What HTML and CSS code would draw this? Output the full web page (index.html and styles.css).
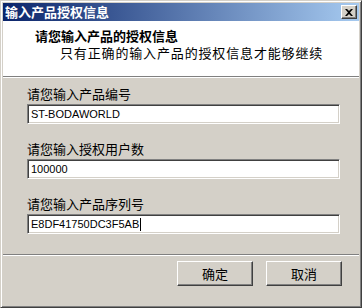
FILE: index.html
```html
<!DOCTYPE html>
<html lang="zh-CN">
<head>
    <meta charset="UTF-8">
    <title>输入产品授权信息</title>
    <link rel="stylesheet" href="styles.css">
</head>
<body>
    <div class="window">
        <div class="titlebar">
            <span class="title">输入产品授权信息</span>
            <button class="close-btn">
                <svg width="8" height="7" viewBox="0 0 8 7">
                    <path d="M0 0h2l2 2 2-2h2L5 3.5 8 7H6L4 5 2 7H0l3-3.5z" fill="#000"/>
                </svg>
            </button>
        </div>

        <div class="header">
            <div class="header-title">请您输入产品的授权信息</div>
            <div class="header-sub">只有正确的输入产品的授权信息才能够继续</div>
        </div>
        <div class="separator"></div>

        <div class="form">
            <div class="field">
                <label>请您输入产品编号</label>
                <div class="textbox">ST-BODAWORLD</div>
            </div>
            <div class="field">
                <label>请您输入授权用户数</label>
                <div class="textbox">100000</div>
            </div>
            <div class="field">
                <label>请您输入产品序列号</label>
                <div class="textbox">E8DF41750DC3F5AB<span class="caret"></span></div>
            </div>
        </div>

        <div class="separator bottom"></div>

        <div class="buttons">
            <button class="btn">确定</button>
            <button class="btn">取消</button>
        </div>
    </div>
</body>
</html>
```

FILE: styles.css
```css
body {
    margin: 0;
    font-family: "Noto Sans CJK SC", "Liberation Sans", sans-serif;
    font-size: 13px;
    color: #000;
}

.window {
    width: 362px;
    height: 308px;
    box-sizing: border-box;
    background-color: #d4d0c8;
    border-top: 1px solid #d4d0c8;
    border-left: 1px solid #d4d0c8;
    border-right: 1px solid #404040;
    border-bottom: 1px solid #404040;
    box-shadow: inset 1px 1px #fff, inset -1px -1px #808080;
    padding: 2px;
    display: flex;
    flex-direction: column;
}

.titlebar {
    height: 18px;
    display: flex;
    align-items: center;
    justify-content: space-between;
    padding: 0 2px 0 2px;
    background: linear-gradient(to right, #0a246a, #a6caf0);
}

.title {
    color: #fff;
    font-weight: bold;
    line-height: 18px;
}

.close-btn {
    width: 16px;
    height: 14px;
    padding: 0;
    margin: 0;
    background-color: #d4d0c8;
    border-top: 1px solid #fff;
    border-left: 1px solid #fff;
    border-right: 1px solid #404040;
    border-bottom: 1px solid #404040;
    box-shadow: inset -1px -1px #808080;
    display: flex;
    align-items: center;
    justify-content: center;
}

.header {
    height: 55px;
    box-sizing: border-box;
    background-color: #fff;
    padding: 6px 0 0 32px;
    line-height: 17px;
}

.header-title {
    font-weight: bold;
}

.header-sub {
    padding-left: 25px;
    letter-spacing: 0.85px;
}

.separator {
    height: 1px;
    background-color: #808080;
    border-bottom: 1px solid #fff;
}

.form {
    padding: 7px 19px 0 24px;
    display: flex;
    flex-direction: column;
    gap: 16px;
}

.field label {
    display: block;
    line-height: 17px;
    margin-bottom: 2px;
}

.textbox {
    height: 20px;
    box-sizing: border-box;
    background-color: #fff;
    border-top: 1px solid #808080;
    border-left: 1px solid #808080;
    border-right: 1px solid #fff;
    border-bottom: 1px solid #fff;
    box-shadow: inset 1px 1px #404040, inset -1px -1px #d4d0c8;
    padding: 0 3px;
    font-family: "Liberation Sans", Arial, sans-serif;
    font-size: 11px;
    line-height: 18px;
    display: flex;
    align-items: center;
}

.caret {
    display: inline-block;
    width: 1px;
    height: 13px;
    background-color: #000;
    margin-left: 1px;
}

.separator.bottom {
    margin-top: 20px;
}

.buttons {
    display: flex;
    justify-content: flex-end;
    gap: 13px;
    padding: 5px 17px 0 0;
}

.btn {
    width: 76px;
    height: 25px;
    padding: 0;
    font-family: "Noto Sans CJK SC", sans-serif;
    font-size: 13px;
    color: #000;
    background-color: #d4d0c8;
    border-top: 1px solid #fff;
    border-left: 1px solid #fff;
    border-right: 1px solid #404040;
    border-bottom: 1px solid #404040;
    box-shadow: inset -1px -1px #808080;
}
```
